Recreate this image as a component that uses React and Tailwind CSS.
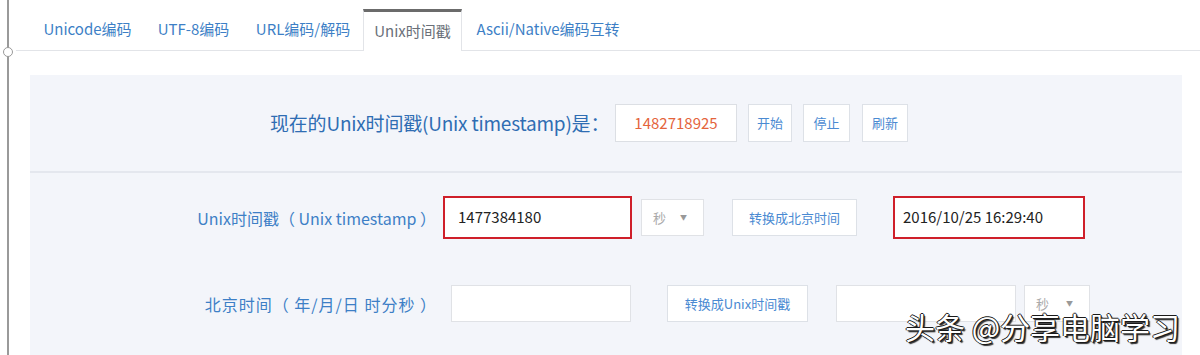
import React from "react";

const tabs = [
  { label: "Unicode编码", w: "w-[113px]" },
  { label: "UTF-8编码", w: "w-[99px]" },
  { label: "URL编码/解码", w: "w-[120px]" },
  { label: "Unix时间戳", w: "w-[99px]", active: true },
  { label: "Ascii/Native编码互转", w: "w-[172px]" },
];

function Btn({ children, className }) {
  return (
    <div
      className={
        "flex h-[37px] items-center justify-center border border-[#dde1e7] bg-white text-[13px] text-[#4a8ad2] " +
        className
      }
    >
      {children}
    </div>
  );
}

function Select({ className }) {
  return (
    <div
      className={
        "flex h-[37px] items-center justify-between border border-[#e0e2e6] bg-white pl-[11px] pr-[16px] text-[13px] text-[#aaa] " +
        className
      }
    >
      <span>秒</span>
      <span className="text-[7px] text-[#999]">▼</span>
    </div>
  );
}

export default function App() {
  return (
    <div
      className="relative flex h-[355px] w-[1200px] overflow-hidden bg-white"
      style={{ fontFamily: '"Noto Sans CJK SC", "Noto Sans", sans-serif' }}
    >
      {/* left rail */}
      <div className="relative w-[16px] shrink-0">
        <div className="ml-[7px] h-full w-[2px] bg-[#9a9a9a]" />
        <div className="absolute left-[3px] top-[47px] h-[10px] w-[10px] rounded-full border-[1.5px] border-[#9a9a9a] bg-white" />
      </div>

      <div className="flex-1">
        {/* tabs */}
        <div className="flex h-[51px] items-end border-b border-[#e2e4e8] pl-[15px]">
          {tabs.map((t) =>
            t.active ? (
              <div
                key={t.label}
                className={
                  t.w +
                  " -mb-px flex h-[42px] items-center justify-center border-x border-t-[3px] border-x-[#e2e4e8] border-t-[#6b6b6b] bg-white text-[15px] text-[#6a6f78]"
                }
              >
                {t.label}
              </div>
            ) : (
              <div
                key={t.label}
                className={t.w + " flex h-[41px] items-center justify-center whitespace-nowrap text-[15px] text-[#3d7fc6]"}
              >
                {t.label}
              </div>
            )
          )}
        </div>

        {/* panel */}
        <div className="ml-[14px] mt-[24px] h-[300px] w-[1152px] bg-[#f3f5fa]">
          <div className="flex h-[98px] items-center border-b-2 border-[#e4e7ee] pl-[240px]">
            <span className="w-[345px] whitespace-nowrap text-[19px] tracking-[-0.2px] text-[#2f6db3]">
              现在的Unix时间戳(Unix timestamp)是：
            </span>
            <div className="flex h-[38px] w-[122px] items-center justify-center border border-[#dcdfe4] bg-white text-[15px] text-[#e4643c]">
              1482718925
            </div>
            <Btn className="ml-[11px] h-[38px] w-[44px]">开始</Btn>
            <Btn className="ml-[11px] h-[38px] w-[47px]">停止</Btn>
            <Btn className="ml-[12px] h-[38px] w-[46px]">刷新</Btn>
          </div>

          <div className="flex items-center pt-[23px]">
            <span className="w-[407px] whitespace-nowrap pr-[1px] text-right text-[16px] text-[#3d7fc6]">
              Unix时间戳（ Unix timestamp ）
            </span>
            <div className="ml-[6px] flex h-[43px] w-[189px] items-center border-2 border-[#cf1f2a] bg-white pl-[13px] text-[15px] text-[#222]">
              1477384180
            </div>
            <Select className="ml-[9px] w-[63px]" />
            <Btn className="ml-[28px] w-[125px]">转换成北京时间</Btn>
            <div className="ml-[36px] flex h-[43px] w-[192px] items-center border-2 border-[#cf1f2a] bg-white pl-[8px] text-[15px] text-[#222]">
              2016/10/25 16:29:40
            </div>
          </div>

          <div className="mt-[46px] flex items-center">
            <span className="w-[407px] whitespace-nowrap text-right text-[16px] tracking-[1px] text-[#3d7fc6]">
              北京时间（ 年/月/日 时分秒 ）
            </span>
            <div className="ml-[14px] h-[37px] w-[180px] border border-[#e0e2e6] bg-white" />
            <Btn className="ml-[36px] w-[141px]">转换成Unix时间戳</Btn>
            <div className="ml-[28px] h-[37px] w-[180px] border border-[#e0e2e6] bg-white" />
            <Select className="ml-[8px] w-[66px]" />
          </div>
        </div>
      </div>

      {/* watermark */}
      <div className="absolute left-[905px] top-[311px] whitespace-nowrap text-[30px] leading-none text-white [text-shadow:1px_1px_0_#1a1a1a,-1px_0_0_#1a1a1a,0_-1px_0_#1a1a1a,1px_0_0_#1a1a1a,2px_2px_1px_#333]">
        头条 @分享电脑学习
      </div>
    </div>
  );
}
